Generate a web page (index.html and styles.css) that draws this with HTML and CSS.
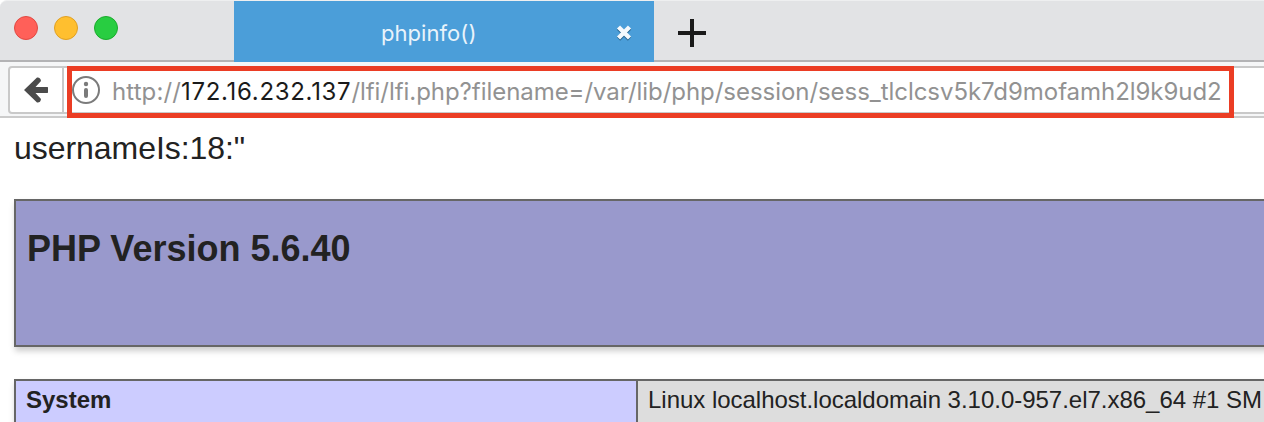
FILE: index.html
```html
<!DOCTYPE html>
<html lang="en">
<head>
<meta charset="utf-8">
<title>phpinfo()</title>
<link rel="stylesheet" href="styles.css">
</head>
<body>
<header class="tabbar">
  <div class="lights"><i class="light red"></i><i class="light yellow"></i><i class="light green"></i></div>
  <div class="tab">
    <span class="tab-title">phpinfo()</span>
    <svg class="close" width="18" height="19" viewBox="0 0 18 19"><path d="M3.500 5l11 11M14.500 5L3.500 16" stroke="#28658f" stroke-width="4.600"/><path d="M3.500 4l11 11M14.500 4L3.500 15" stroke="#f4f9fd" stroke-width="4.400"/></svg>
  </div>
  <svg class="plus" width="28" height="28" viewBox="0 0 28 28"><path d="M14 0v28M0 14h28" stroke="#1a1a1a" stroke-width="4"/></svg>
</header>
<nav class="toolbar">
  <div class="back"><svg width="26" height="28" viewBox="0 0 26 28"><path d="M1 14L14 1.500Q17.500 1 18 5L12.500 11H24.500Q25 11 25 12V16Q25 17 24.500 17H12.500L18 23Q17.500 27 14 26.500Z" fill="#4b4b4b"/></svg></div>
  <div class="urlfield"></div>
  <div class="highlight">
    <svg class="info" width="28" height="28" viewBox="0 0 28 28"><circle cx="14" cy="14" r="13" fill="none" stroke="#7b7b7b" stroke-width="2"/><circle cx="14" cy="8" r="2.200" fill="#7b7b7b"/><path d="M14 14v6" stroke="#7b7b7b" stroke-width="4" stroke-linecap="round"/></svg>
    <div class="url"><span class="scheme">http://</span><span class="host">172.16.232.137</span><span class="path">/lfi/lfi.php?filename=/var/lib/php/session/sess_tlclcsv5k7d9mofamh2l9k9ud2</span></div>
  </div>
</nav>
<main class="page">
  <p class="session">usernameIs:18:"</p>
  <section class="banner"><h1>PHP Version 5.6.40</h1></section>
  <section class="row"><div class="key">System</div><div class="value">Linux localhost.localdomain 3.10.0-957.el7.x86_64 #1 SM</div></section>
</main>
</body>
</html>
```
FILE: styles.css
```css
* { box-sizing: border-box; }
body { margin: 0; width: 1264px; height: 422px; overflow: hidden; background: #fff; color: #222; font-family: "Liberation Sans", Arial, sans-serif; }
svg { display: block; flex: none; }
.tabbar { display: flex; height: 62px; background: #e2e3e5; border-top: 1px solid #eeeff0; box-shadow: inset 0 -2px #b3b3b5; border-top-left-radius: 7px; }
.lights { display: flex; gap: 16px; width: 234px; padding: 15px 0 0 14px; }
.light { width: 24px; height: 24px; border-radius: 50%; border: 1px solid; }
.red { background: #ff6059; border-color: #e14942; }
.yellow { background: #ffbf2f; border-color: #e0a023; }
.green { background: #28cd41; border-color: #1aab2c; }
.tab { display: flex; width: 420px; background: #4b9ed9; color: #e9f3fb; }
.tab-title { width: 381px; padding: 18px 0 0 147px; font: 22px/28px Inter, sans-serif; letter-spacing: .05px; white-space: nowrap; }
.close { margin-top: 22px; }
.plus { margin: 18px 0 0 24px; }
.toolbar { display: flex; position: relative; height: 56px; background: #f5f6f7; border-bottom: 2px solid #cbcbcb; padding: 4px 0 0 8px; }
.back { width: 56px; height: 48px; border: 2px solid #c9c9c9; border-radius: 4px 0 0 4px; background: #fff; padding: 8px 0 0 13px; }
.urlfield { flex: 1; height: 48px; border: solid #c9c9c9; border-width: 2px 0; background: #fff; }
.highlight { position: absolute; left: 67px; top: 4px; width: 1167px; height: 52px; border: 5px solid #eb3d24; background: #fff; display: flex; box-shadow: inset 0 -1px #c9c9c9; }
.info { margin-top: 5px; }
.url { padding: 6px 0 0 12px; font: 24px/30px Inter, sans-serif; white-space: nowrap; color: #929292; }
.url span { display: inline-block; }
.scheme { letter-spacing: .1px; }
.host { color: #1a1a1a; letter-spacing: .7px; }
.path { letter-spacing: -.05px; }
.page { padding-left: 14px; }
.session { margin: 0; padding-top: 12px; height: 81px; font-size: 32px; line-height: 37px; letter-spacing: -.05px; }
.banner { width: 1300px; height: 148px; border: 2px solid #666; background: #9999cc; box-shadow: 1px 4px 6px #ccc; padding: 27px 0 0 11px; }
.banner h1 { margin: 0; font-size: 36px; line-height: 41px; }
.row { display: flex; width: 1300px; height: 60px; margin-top: 32px; border: 2px solid #666; font-size: 24px; line-height: 28px; box-shadow: 1px 4px 6px #ccc; white-space: nowrap; }
.key { width: 622px; border-right: 2px solid #666; background: #ccccff; padding: 5px 0 0 10px; font-weight: bold; }
.value { flex: 1; background: #ddd; padding: 5px 0 0 10px; letter-spacing: -.02px; }
```
